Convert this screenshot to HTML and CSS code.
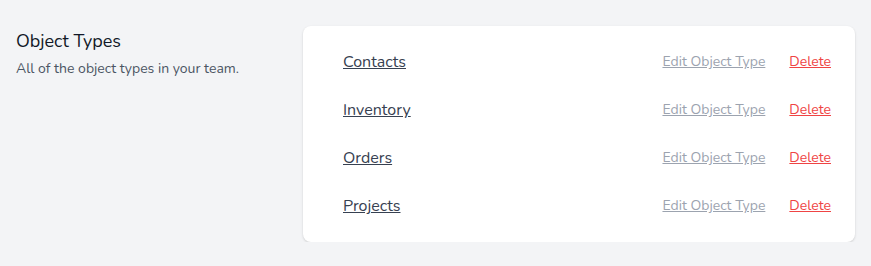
FILE: index.html
```html
<!DOCTYPE html>
<html>
<head>
<meta charset="utf-8">
<link rel="stylesheet" href="styles.css">
</head>
<body>
<div class="page">
  <div class="section">
    <div class="intro">
      <h3 class="title">Object Types</h3>
      <p class="desc">All of the object types in your team.</p>
    </div>
    <div class="card">
      <div class="row">
        <a class="name" href="#">Contacts</a>
        <div class="actions"><a class="edit" href="#">Edit Object Type</a><a class="delete" href="#">Delete</a></div>
      </div>
      <div class="row">
        <a class="name" href="#">Inventory</a>
        <div class="actions"><a class="edit" href="#">Edit Object Type</a><a class="delete" href="#">Delete</a></div>
      </div>
      <div class="row">
        <a class="name" href="#">Orders</a>
        <div class="actions"><a class="edit" href="#">Edit Object Type</a><a class="delete" href="#">Delete</a></div>
      </div>
      <div class="row">
        <a class="name" href="#">Projects</a>
        <div class="actions"><a class="edit" href="#">Edit Object Type</a><a class="delete" href="#">Delete</a></div>
      </div>
    </div>
  </div>
</div>
</body>
</html>
```
FILE: styles.css
```css
html, body {
  margin: 0;
  padding: 0;
  background: #f3f4f6;
  font-family: "Nunito", "Lato", "Noto Sans", sans-serif;
}
.page {
  padding: 26px 16px 0 16px;
}
.section {
  display: grid;
  grid-template-columns: 263px 1fr;
  gap: 24px;
}
.intro {
  padding-top: 1px;
}
.title {
  margin: 0;
  font-size: 18px;
  line-height: 28px;
  font-weight: 400;
  color: #111827;
}
.desc {
  margin: 4px 0 0 0;
  font-size: 14px;
  line-height: 20px;
  color: #4b5563;
}
.card {
  background: #fff;
  border-radius: 8px;
  box-shadow: 0 1px 3px 0 rgba(0,0,0,0.1), 0 1px 2px 0 rgba(0,0,0,0.06);
  padding: 24px 24px 24px 40px;
  display: flex;
  flex-direction: column;
  gap: 24px;
}
.row {
  display: flex;
  justify-content: space-between;
  align-items: center;
  height: 24px;
}
.name {
  font-size: 16px;
  line-height: 24px;
  color: #374151;
  text-decoration: underline;
}
.actions {
  display: flex;
  align-items: center;
}
.edit {
  font-size: 14px;
  line-height: 20px;
  color: #9ca3af;
  text-decoration: underline;
}
.delete {
  margin-left: 24px;
  font-size: 14px;
  line-height: 20px;
  color: #ef4444;
  text-decoration: underline;
}
```
